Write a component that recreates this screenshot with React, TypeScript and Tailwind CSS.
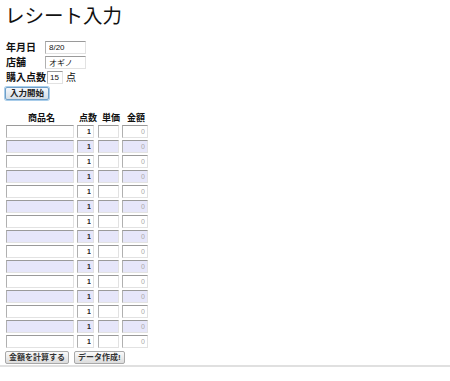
import React from "react";

const font = { fontFamily: '"Liberation Sans", "Noto Sans CJK JP", sans-serif' };

const inset =
  "border border-t-[#9a9a9a] border-l-[#b0b0b0] border-b-[#e2e2e2] border-r-[#e2e2e2] outline-none";

function Btn({ children }: { children: React.ReactNode }) {
  return (
    <button className="h-[13px] px-[3px] text-[8px] leading-none font-bold text-[#333] bg-gradient-to-b from-[#fafafa] to-[#dcdcdc] border border-[#a8a8a8] rounded-[2px]">
      {children}
    </button>
  );
}

export default function App() {
  const rows = Array.from({ length: 15 }, (_, i) => i);

  return (
    <div className="w-[450px] h-[381px] bg-white overflow-hidden text-[#111]" style={font}>
      <h1 className="pl-[5px] pt-[5px] text-[19.5px] leading-[22px]">レシート入力</h1>

      <div className="pl-[6px] pt-[13px] text-[10px] font-bold leading-none flex flex-col">
        <div className="flex items-center h-[15px]">
          <span className="w-[39px]">年月日</span>
          <input readOnly value="8/20" className={`${inset} w-[41px] h-[13px] px-[3px] text-[8px] font-normal`} />
        </div>
        <div className="flex items-center h-[15px]">
          <span className="w-[39px]">店舗</span>
          <input readOnly value="オギノ" className={`${inset} w-[41px] h-[13px] px-[3px] text-[8px] font-normal`} />
        </div>
        <div className="flex items-center h-[15px]">
          <span className="w-[41px]">購入点数</span>
          <input readOnly value="15" className={`${inset} w-[16px] h-[13px] px-[2px] text-[8px] font-normal`} />
          <span className="ml-[3px] font-normal">点</span>
        </div>
      </div>

      <div className="pl-[5px] pt-[2px] flex">
        <button className="h-[13px] px-[4px] text-[8.5px] leading-none font-bold text-[#222] bg-gradient-to-b from-[#f4f8fc] to-[#d4dde6] border border-[#6f9fc8] rounded-[2px] ring-1 ring-[#a9cdea]">
          入力開始
        </button>
      </div>

      <div className="pl-[6px] pt-[11px] flex flex-col gap-[2px]">
        <div className="flex items-end h-[12px] text-[9px] font-bold leading-none">
          <span className="w-[71px] text-center">商品名</span>
          <span className="w-[22px] text-center">点数</span>
          <span className="w-[24px] text-center">単価</span>
          <span className="w-[26px] text-center">金額</span>
        </div>
        {rows.map((i) => {
          const bg = i % 2 === 1 ? "bg-[#e6e6fa]" : "bg-white";
          return (
            <div key={i} className="flex items-center h-[13px]">
              <input readOnly className={`${inset} ${bg} w-[68px] h-[13px]`} />
              <input
                readOnly
                value="1"
                className={`${inset} ${bg} ml-[3px] w-[17px] h-[13px] px-[2px] text-[7px] text-right font-bold text-[#222]`}
              />
              <input readOnly className={`${inset} ${bg} ml-[4px] w-[21px] h-[13px]`} />
              <input
                readOnly
                value="0"
                className={`${inset} ${bg} ml-[3px] w-[26px] h-[13px] px-[2px] text-[7px] text-right text-[#aaa]`}
              />
            </div>
          );
        })}
      </div>

      <div className="pl-[5px] pt-[3px] flex gap-[5px]">
        <Btn>金額を計算する</Btn>
        <Btn>データ作成!</Btn>
      </div>

      <textarea
        readOnly
        className="mt-[1px] block w-[450px] h-[40px] border-t-2 border-[#e0e0e0] resize-none outline-none"
      />
    </div>
  );
}
